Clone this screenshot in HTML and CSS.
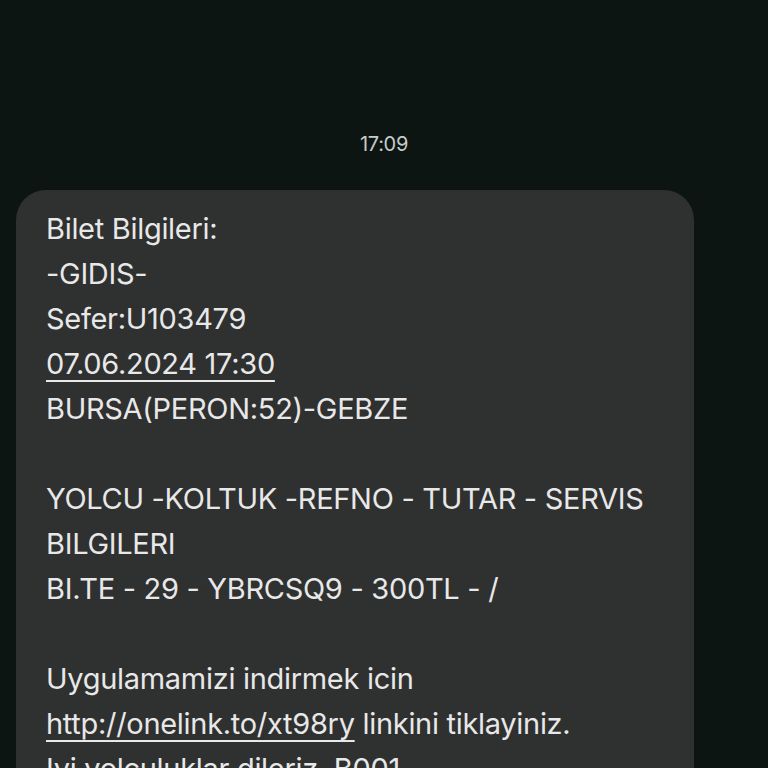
FILE: index.html
```html
<!DOCTYPE html>
<html>
<head>
  <meta charset="utf-8">
  <title>Mesajlar</title>
  <link rel="stylesheet" href="styles.css">
</head>
<body>

  <div class="thread">
    <div class="stamp">17:09</div>

    <!-- incoming message -->
    <div class="bubble">
      <p>Bilet Bilgileri:<br>
      -GIDIS-<br>
      Sefer:U103479<br>
      <span class="link">07.06.2024 17:30</span><br>
      BURSA(PERON:52)-GEBZE<br>
      <br>
      YOLCU -KOLTUK -REFNO - TUTAR - SERVIS BILGILERI<br>
      BI.TE - 29 - YBRCSQ9 - 300TL - /<br>
      <br>
      Uygulamamizi indirmek icin<br>
      <span class="link">http://onelink.to/xt98ry</span> linkini tiklayiniz.<br>
      Iyi yolculuklar dileriz. B001</p>
    </div>
  </div>

</body>
</html>
```

FILE: styles.css
```css
body {
  margin: 0;
  background: #0d1512;
  font-family: Inter, Roboto, sans-serif;
  overflow: hidden;
}

.thread {
  padding-top: 129px;
}

.stamp {
  text-align: center;
  color: #c8cbca;
  font-size: 20px;
  line-height: 30px;
  letter-spacing: -0.3px;
}

.bubble {
  margin: 31px 0 0 16px;
  width: 678px;
  box-sizing: border-box;
  background: #2f3030;
  border-radius: 30px;
  padding: 16px 30px 40px 30px;
  color: #e8e8e8;
}

.bubble p {
  margin: 0;
  font-size: 29px;
  line-height: 45px;
  letter-spacing: -0.3px;
}

.link {
  text-decoration: underline;
  text-decoration-thickness: 2px;
  text-underline-offset: 6px;
}
```
